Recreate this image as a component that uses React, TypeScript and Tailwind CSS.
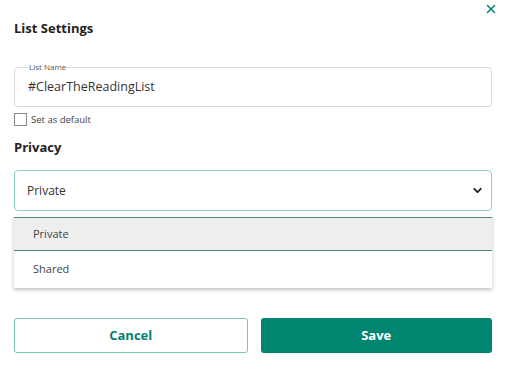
import { ChevronDown, X } from "lucide-react"

export default function App() {
  return (
    <div className="relative w-[508px] h-[380px] bg-white font-['Open_Sans','Liberation_Sans',sans-serif] text-[#333]">
      <button className="absolute right-[10px] top-[2px] text-[#00826f]">
        <X className="w-[14px] h-[14px]" strokeWidth={2.5} />
      </button>

      <div className="pl-[14px] pr-[16px] pt-[17px]">
        <h1 className="text-[13px] font-bold leading-[22px] text-[#222]">List Settings</h1>

        <fieldset className="mt-[24px] h-[44px] rounded-[4px] border border-[#d9d9d9] px-[13px]">
          <legend className="px-[1px] text-[8px] leading-[8px] text-[#555]">List Name</legend>
          <div className="text-[12.5px] leading-[20px] mt-[6px] text-[#333]">#ClearTheReadingList</div>
        </fieldset>

        <label className="mt-[6px] flex items-center gap-[4px] text-[9.5px] leading-[13px] text-[#444]">
          <span className="w-[13px] h-[13px] border border-[#888] bg-white" />
          Set as default
        </label>

        <h2 className="mt-[11px] text-[13px] font-bold leading-[20px] text-[#222]">Privacy</h2>

        <div className="relative mt-[13px]">
          <div className="h-[41px] flex items-center justify-between rounded-[4px] border border-[#8fd0c7] pl-[12px] pr-[7px]">
            <span className="text-[12px] text-[#333]">Private</span>
            <ChevronDown className="w-[13px] h-[13px] text-[#222]" strokeWidth={3.5} />
          </div>

          <div className="absolute left-0 right-0 top-[45px] bg-white shadow-[0_2px_4px_rgba(0,0,0,0.25)]">
            <div className="h-[2px]" />
            <div className="h-[34px] flex items-center border-y border-[#4e8a7f] bg-[#eeeeee] pl-[19px] text-[11px] text-[#444]">Private</div>
            <div className="h-[37px] flex items-center pl-[19px] text-[11px] text-[#444]">Shared</div>
          </div>
        </div>

        <div className="mt-[107px] flex gap-[13px]">
          <button className="flex-1 h-[35px] rounded-[3px] border border-[#7cc3b8] bg-white text-[13px] font-bold text-[#00826f]">Cancel</button>
          <button className="flex-1 h-[35px] rounded-[3px] bg-[#008571] text-[13px] font-bold text-white">Save</button>
        </div>
      </div>
    </div>
  )
}
